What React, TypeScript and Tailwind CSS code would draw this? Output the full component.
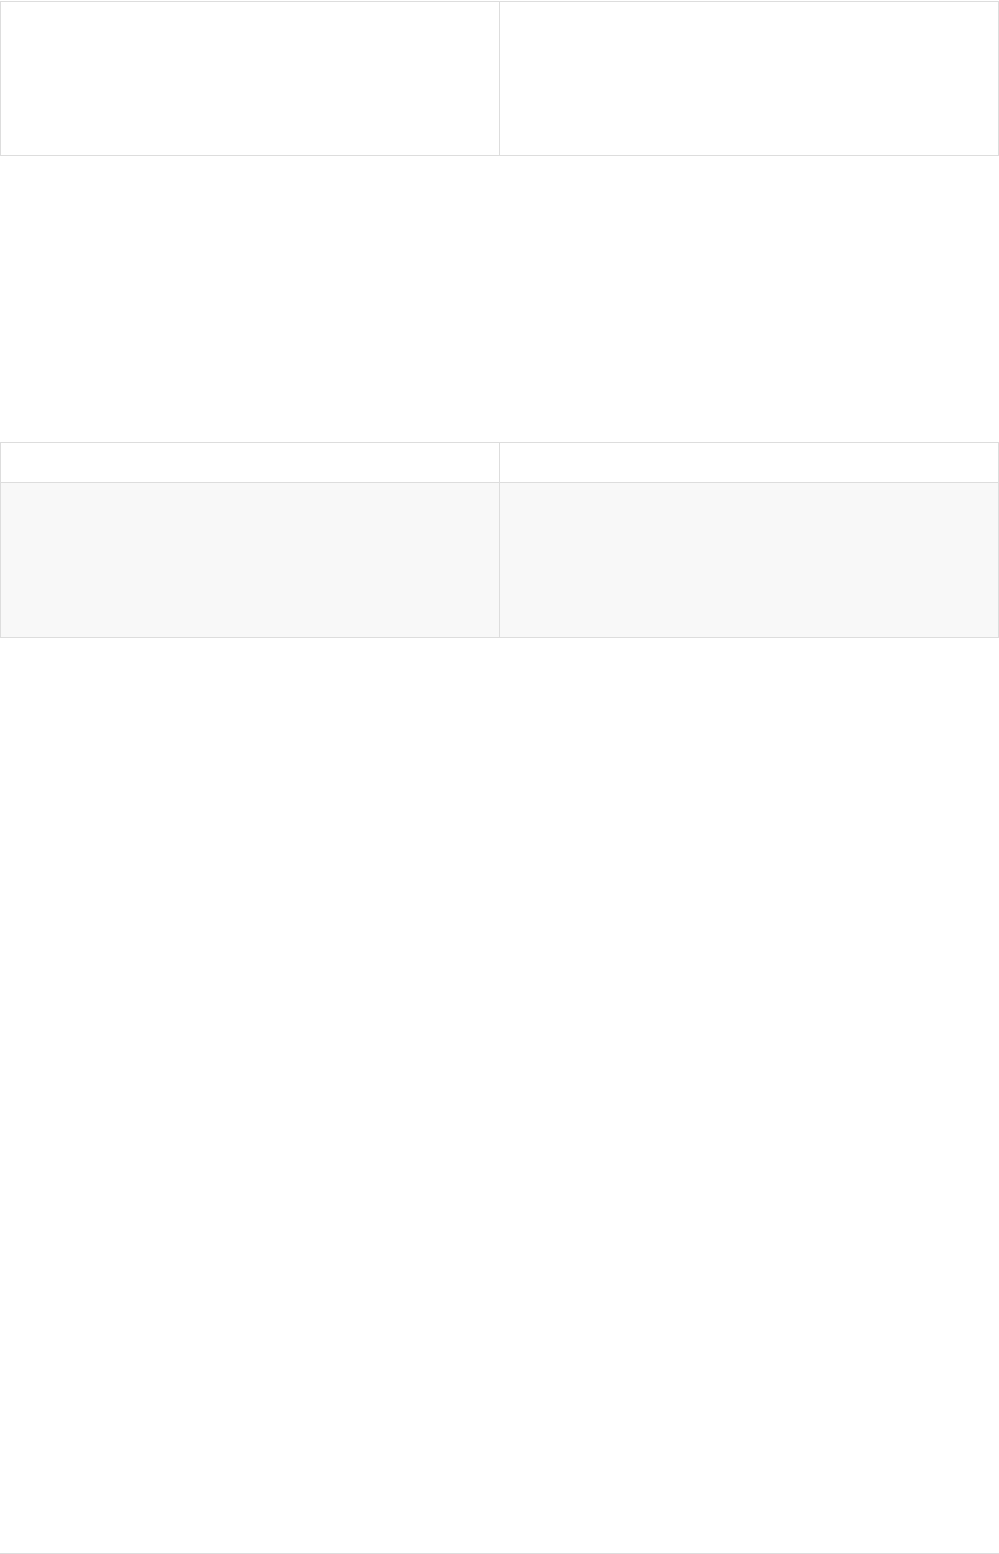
export default function App() {
  return (
    <div className="w-[999px] h-[1554px] bg-white border-b border-[#dddddd] font-['Liberation_Sans',sans-serif] flex flex-col">
      <div className="mt-px w-[999px] h-[155px] border border-[#dddddd] flex">
        <div className="w-[499px] border-r border-[#dddddd]"></div>
        <div className="flex-1"></div>
      </div>
      <div className="mt-[286px] w-[999px] border border-[#dddddd] flex flex-col">
        <div className="h-[40px] border-b border-[#dddddd] flex">
          <div className="w-[499px] border-r border-[#dddddd]"></div>
          <div className="flex-1"></div>
        </div>
        <div className="h-[154px] bg-[#f8f8f8] flex">
          <div className="w-[499px] border-r border-[#dddddd]"></div>
          <div className="flex-1"></div>
        </div>
      </div>
    </div>
  );
}
